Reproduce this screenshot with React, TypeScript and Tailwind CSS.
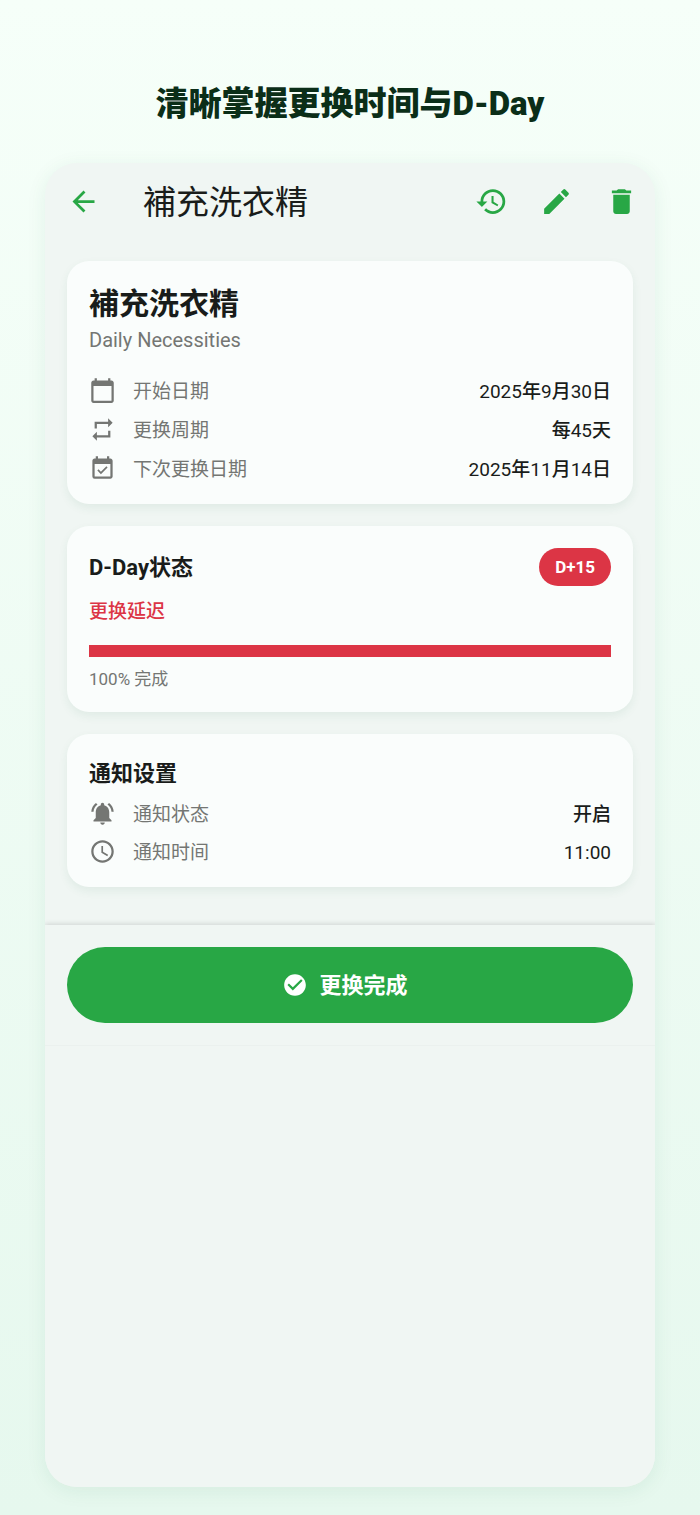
import React from 'react';
import type { IconType } from 'react-icons';
import {
  MdAccessTime,
  MdArrowBack,
  MdCalendarToday,
  MdCheckCircle,
  MdDelete,
  MdEdit,
  MdEventAvailable,
  MdHistory,
  MdNotificationsActive,
  MdRepeat,
} from 'react-icons/md';

interface InfoItem {
  icon: IconType;
  label: string;
  value: string;
}

const item = {
  name: '補充洗衣精',
  category: 'Daily Necessities',
  dday: 'D+15',
  status: '更换延迟',
  progress: 100,
};

const scheduleItems: InfoItem[] = [
  { icon: MdCalendarToday, label: '开始日期', value: '2025年9月30日' },
  { icon: MdRepeat, label: '更换周期', value: '每45天' },
  { icon: MdEventAvailable, label: '下次更换日期', value: '2025年11月14日' },
];

const notificationItems: InfoItem[] = [
  { icon: MdNotificationsActive, label: '通知状态', value: '开启' },
  { icon: MdAccessTime, label: '通知时间', value: '11:00' },
];

const InfoRow: React.FC<{ item: InfoItem }> = ({ item }) => (
  <div className="flex h-[27px] items-center text-[19px] leading-7">
    <item.icon size={27} className="mr-[17px] shrink-0 text-[#747673]" />
    <dt className="pt-0.5 text-[#747673]">{item.label}</dt>
    <dd className="ml-auto pt-0.5 font-['Roboto','Noto_Sans_CJK_SC_Medium','Noto_Sans_CJK_SC',sans-serif] text-[#191c1a]">
      {item.value}
    </dd>
  </div>
);

const Card: React.FC<{ children: React.ReactNode }> = ({ children }) => (
  <section className="rounded-[22px] bg-[#fafdfc] p-[22px] shadow-[0_4px_10px_rgba(40,120,80,0.08)]">
    {children}
  </section>
);

const App: React.FC = () => {
  return (
    <div
      lang="zh-CN"
      className="flex min-h-screen flex-col bg-linear-to-b from-[#f6fff9] to-[#e6f8ee] px-[45px] pb-7 font-['Roboto','Noto_Sans_CJK_SC',sans-serif]"
    >
      <h1 className="pt-20 pb-[35px] text-center text-[33px] leading-[48px] font-black text-[#0b2e18]">
        清晰掌握更换时间与D-Day
      </h1>

      <main className="flex flex-1 flex-col overflow-hidden rounded-[32px] bg-[#f0f6f3] shadow-[0_4px_20px_rgba(30,100,60,0.08)]">
        <header className="flex h-[76px] items-center px-[22px] text-[#28a745]">
          <button type="button" aria-label="返回" className="cursor-pointer">
            <MdArrowBack size={33} />
          </button>
          <h2 className="ml-[43px] pt-1 text-[33px] leading-[48px] text-[#191c1a]">{item.name}</h2>
          <div className="ml-auto flex items-center gap-8 -mr-[5px]">
            <button type="button" aria-label="历史" className="cursor-pointer">
              <MdHistory size={33} />
            </button>
            <button type="button" aria-label="编辑" className="cursor-pointer">
              <MdEdit size={33} />
            </button>
            <button type="button" aria-label="删除" className="cursor-pointer">
              <MdDelete size={33} />
            </button>
          </div>
        </header>

        <div className="flex flex-col gap-[22px] px-[22px] pt-[22px] pb-[38px]">
          <Card>
            <h3 className="text-[30px] leading-[42px] font-bold text-[#191c1a]">{item.name}</h3>
            <p className="text-[20px] leading-[30px] text-[#747673]">{item.category}</p>
            <dl className="mt-[22px] flex flex-col gap-3">
              {scheduleItems.map(row => (
                <InfoRow key={row.label} item={row} />
              ))}
            </dl>
          </Card>

          <Card>
            <div className="flex items-center justify-between">
              <h3 className="pt-0.5 text-[22px] leading-8 font-bold text-[#191c1a]">D-Day状态</h3>
              <span className="rounded-full bg-[#dc3545] px-4 text-[17px] leading-[38px] font-bold text-white">
                {item.dday}
              </span>
            </div>
            <p className="mt-3 text-[19px] leading-7 font-medium text-[#dc3545]">{item.status}</p>
            <div
              role="progressbar"
              aria-label="更换进度"
              aria-valuenow={item.progress}
              className="mt-[19px] h-3 bg-[#e1e6e3]"
            >
              <div className="h-full bg-[#dc3545]" style={{ width: `${item.progress}%` }} />
            </div>
            <p className="mt-[11px] text-[17px] leading-[22px] text-[#747673]">{item.progress}% 完成</p>
          </Card>

          <Card>
            <h3 className="pt-0.5 text-[22px] leading-8 font-bold text-[#191c1a]">通知设置</h3>
            <dl className="mt-2.5 flex flex-col gap-[11px]">
              {notificationItems.map(row => (
                <InfoRow key={row.label} item={row} />
              ))}
            </dl>
          </Card>
        </div>

        {/* Bottom action */}
        <div className="border-b border-[#ebf1ee] bg-[#f0f6f3] p-[22px] shadow-[0_-1px_5px_rgba(0,0,0,0.14)]">
          <button
            type="button"
            className="flex h-[76px] w-full cursor-pointer items-center justify-center gap-[11px] rounded-full bg-[#28a745] pr-[10px] text-[22px] leading-8 font-bold text-white"
          >
            <MdCheckCircle size={26} />
            <span className="pt-0.5">更换完成</span>
          </button>
        </div>
        <div className="relative flex-1 bg-[#f0f6f3]" />
      </main>
    </div>
  );
};

export default App;
